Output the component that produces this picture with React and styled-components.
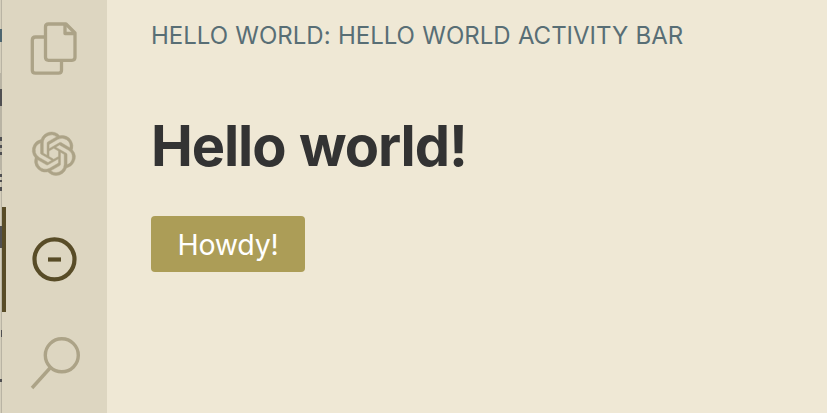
import React from 'react';
import styled, { createGlobalStyle } from 'styled-components';
import { SiOpenai } from 'react-icons/si';

const GlobalStyle = createGlobalStyle`
  * { box-sizing: border-box; }
  body { margin: 0; background: #fff; font-family: Inter, 'Liberation Sans', sans-serif; overflow: hidden; -webkit-font-smoothing: antialiased; }
`;

const Window = styled.div`
  display: flex;
  width: 827px;
  height: 413px;
  background: #efe8d5;
`;

const Backdrop = styled.svg`
  flex: none;
  width: 2px;
  height: 413px;
  display: block;
`;

const ActivityBar = styled.nav`
  flex: none;
  width: 105px;
  height: 413px;
  overflow: hidden;
  background: #ddd6c1;
`;

const Action = styled.button`
  display: flex;
  align-items: center;
  justify-content: center;
  width: 105px;
  height: 105px;
  margin: 0;
  padding: 0 5px 1px 0;
  border: 0;
  border-left: 4px solid ${(p) => (p.$active ? '#584c27' : 'transparent')};
  background: none;
  color: ${(p) => (p.$active ? '#584c27' : '#aca387')};

  &:first-child { height: 102px; padding-bottom: 4px; }
  svg { display: block; flex: none; }
`;

const KnotIcon = styled(SiOpenai)`
  width: 43.5px;
  height: 43.5px;
  overflow: visible;
  path { stroke: currentColor; stroke-width: 0.25px; }
`;

const Glyph = styled.svg`
  width: 60px;
  height: 60px;
  fill: none;
  stroke: currentColor;
`;

const SideBar = styled.main`
  flex: 1;
  padding: 20px 0 0 44px;
`;

const Title = styled.h2`
  margin: 0;
  font-size: 24px;
  line-height: 32px;
  font-weight: 410;
  letter-spacing: -0.01px;
  word-spacing: 0.6px;
  color: #586e75;
  white-space: nowrap;
`;

const Heading = styled.h1`
  margin: 59px 0 0;
  font-size: 56px;
  line-height: 70px;
  font-weight: 700;
  letter-spacing: -1.1px;
  word-spacing: 1.5px;
  color: #333;
  white-space: nowrap;
`;

const Button = styled.button`
  display: block;
  width: 154px;
  height: 56px;
  margin-top: 35px;
  padding: 2px 0 0;
  border: 0;
  border-radius: 4px;
  background: #ac9d57;
  color: #fff;
  font: 420 28.5px/54px Inter, 'Liberation Sans', sans-serif;
  letter-spacing: -0.2px;
`;

export default function App() {
  return (
    <>
      <GlobalStyle />
      <Window>
        <Backdrop viewBox="0 0 2 413" shapeRendering="crispEdges">
          <path fill="#d4cebb" d="M0 0h2v413H0z" />
          <path fill="#b9b4a4" d="M1 0h1v413H1zM0 73h2v97H0z" />
          <path fill="#4d6670" d="M0 29h2v13H0z" />
          <path fill="#505052" d="M0 89h2v17H0zM0 137h2v4H0zM0 145h2v3H0zM0 152h2v3H0zM0 174h2v3H0zM0 180h2v2H0zM0 187h2v4H0zM0 226h2v22H0zM1 330h1v7H1zM0 379h2v3H0z" />
        </Backdrop>
        <ActivityBar>
          <Action aria-label="Explorer">
            <Glyph viewBox="24 19 60 60" strokeWidth="3.300" strokeLinejoin="round">
              <path d="M44.5 37H35.500q-3.200 0-3.200 3.200V70.200q0 3 3.200 3H58.500q3 0 3-3V62" />
              <path d="M48.500 24H66L75 33V57.300q0 3-3 3H48.500q-3 0-3-3V27q0-3 3-3Z" />
              <path d="M65 24V33.500H75" />
            </Glyph>
          </Action>
          <Action aria-label="ChatGPT"><KnotIcon /></Action>
          <Action $active aria-label="Hello World">
            <Glyph viewBox="24 229 60 60" strokeWidth="4.200">
              <circle cx="54.500" cy="259.300" r="20" />
              <path d="M48 259.500h13" />
            </Glyph>
          </Action>
          <Action aria-label="Search">
            <Glyph viewBox="24 334 60 60" strokeWidth="3.400">
              <circle cx="61.800" cy="355.300" r="16.500" />
              <path d="M50.500 367.500L32 388" />
            </Glyph>
          </Action>
        </ActivityBar>
        <SideBar>
          <Title>HELLO WORLD: HELLO WORLD ACTIVITY BAR</Title>
          <Heading>Hello world!</Heading>
          <Button>Howdy!</Button>
        </SideBar>
      </Window>
    </>
  );
}
